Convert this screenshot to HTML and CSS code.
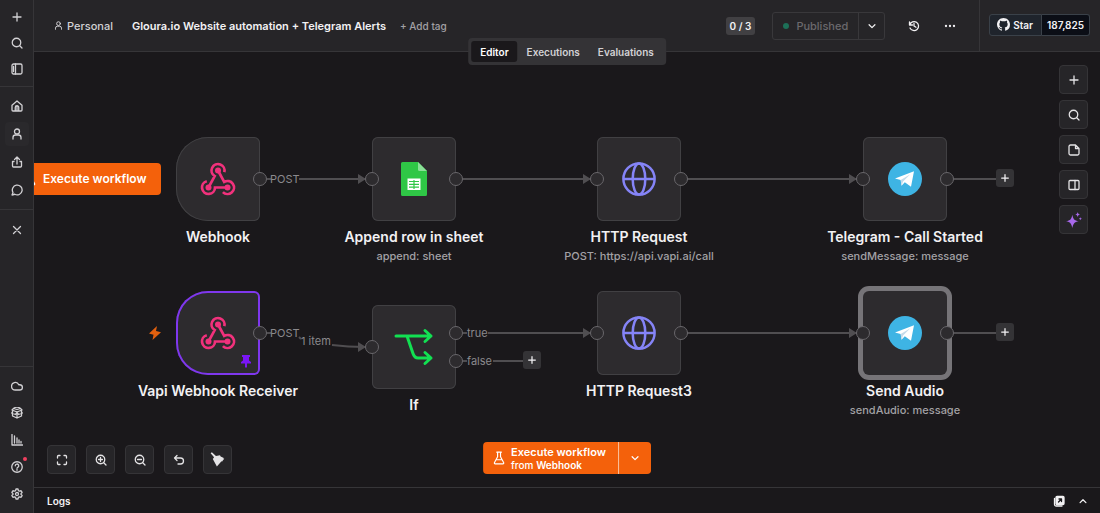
FILE: index.html
```html
<!DOCTYPE html>
<html lang="en">
<head>
<meta charset="utf-8">
<meta name="viewport" content="width=device-width, initial-scale=1">
<title>Gloura.io Website automation + Telegram Alerts</title>
<link rel="stylesheet" href="styles.css">
</head>
<body>
<svg class="defs" aria-hidden="true">
  <defs>
    <symbol id="plus" viewBox="0 0 24 24"><path d="M4 12h16M12 4v16"/></symbol>
    <symbol id="search" viewBox="0 0 24 24"><circle cx="11" cy="11" r="8.500"/><path d="m22 22-5-5"/></symbol>
    <symbol id="user" viewBox="0 0 24 24"><circle cx="12" cy="7" r="5"/><path d="M4 22v-3a5 5 0 0 1 5-5h6a5 5 0 0 1 5 5v3"/></symbol>
    <symbol id="chevron-down" viewBox="0 0 24 24"><path d="m5 9 7 7 7-7"/></symbol>
    <symbol id="flask" viewBox="0 0 24 24"><path d="M8 2h8M9.500 2v8L4 20a1.500 1.500 0 0 0 1.300 2h13.400a1.500 1.500 0 0 0 1.300-2L14.500 10V2M7 15h10"/></symbol>
    <symbol id="webhook" viewBox="0 0 36 36">
      <path d="M8.500 26.500 14.700 15.100A6.500 6.500 0 1 1 24.300 11.200M18 9.500 24.200 20.900A6.500 6.500 0 1 1 22.900 31.100M27.500 26.500H15A6.500 6.500 0 1 1 6.800 20.200" fill="none" stroke="#f1317c" stroke-width="2.700"/>
      <g fill="#f1317c"><circle cx="18" cy="9.500" r="3"/><circle cx="8.500" cy="26.500" r="3"/><circle cx="27.500" cy="26.500" r="3"/></g>
    </symbol>
    <symbol id="globe" viewBox="0 0 36 36"><g fill="none" stroke="#8584f7" stroke-width="2.500"><circle cx="18" cy="18" r="15.600"/><ellipse cx="18" cy="18" rx="6.300" ry="15.600"/><path d="M2.400 18h31.200"/></g></symbol>
    <symbol id="telegram" viewBox="0 0 36 36"><circle cx="18" cy="18" r="17" fill="#3eb4e4"/><path d="M8 17.600 27 10.200 24 25.800l-6.200-4.500-3.300 3.500-.8-5.700z" fill="#fff"/><path d="m13.700 19.100 9.600-5.900-7.200 7.400-1.600 4.200z" fill="#c5dbea"/></symbol>
  </defs>
</svg>
<div class="app">
  <nav class="sidebar" aria-label="Main">
    <div class="side-group side-top">
      <button class="side-btn" aria-label="Add"><svg class="icon"><use href="#plus"/></svg></button>
      <button class="side-btn" aria-label="Search"><svg class="icon"><use href="#search"/></svg></button>
      <button class="side-btn" aria-label="Toggle sidebar"><svg class="icon" viewBox="0 0 24 24"><rect x="2" y="2" width="20" height="20" rx="3"/><path d="M9 2v20M5 7v10"/></svg></button>
    </div>
    <div class="side-group">
      <button class="side-btn" aria-label="Home"><svg class="icon" viewBox="0 0 24 24"><path d="M2 10.500 12 2l10 8.500V20a2 2 0 0 1-2 2H4a2 2 0 0 1-2-2zM8.500 22v-7a3.500 3.500 0 0 1 7 0v7M12 14v8"/></svg></button>
      <button class="side-btn side-btn-active" aria-label="Personal"><svg class="icon"><use href="#user"/></svg></button>
      <button class="side-btn" aria-label="Shared with you"><svg class="icon" viewBox="0 0 24 24"><path d="M12 16V2M7 7l5-5 5 5M6 11H3v9a2 2 0 0 0 2 2h14a2 2 0 0 0 2-2v-9h-3"/></svg></button>
      <button class="side-btn" aria-label="Chat"><svg class="icon" viewBox="0 0 24 24"><path d="M7.500 20.500A9.800 9.800 0 1 0 4 17L2 22z"/></svg></button>
    </div>
    <div class="side-group side-close">
      <button class="side-btn" aria-label="Close"><svg class="icon" viewBox="0 0 24 24"><path d="m5 5 14 14M19 5 5 19"/></svg></button>
    </div>
    <div class="side-group side-bottom">
      <button class="side-btn" aria-label="Cloud"><svg class="icon" viewBox="0 0 24 24"><path d="M17.500 20H8.500a7.500 7.500 0 1 1 7-10.500h2a5.200 5.200 0 0 1 0 10.500z"/></svg></button>
      <button class="side-btn" aria-label="Templates"><svg class="icon" viewBox="0 0 24 24"><path d="M12 10 2 6l3-3 7 2 7-2 3 3zM3 7v11l9 4 9-4V7M12 10v12M1 12l8 3 3-5 3 5 8-3M5 3c4-3 10-3 14 0"/></svg></button>
      <button class="side-btn" aria-label="Insights"><svg class="icon" viewBox="0 0 24 24"><path d="M2 1v21h21M7 18V4M12 18V8M16 18v-6M20 18v-3"/></svg></button>
      <button class="side-btn side-btn-alert" aria-label="Help"><svg class="icon" viewBox="0 0 24 24"><circle cx="12" cy="12" r="10.500"/><path d="M8.500 9.500a3.500 3.500 0 1 1 5 3.200c-1 .5-1.500.8-1.500 1.800M12 17v1.500"/></svg></button>
      <button class="side-btn" aria-label="Settings"><svg class="icon" viewBox="0 0 24 24"><path d="M10 2h4l.8 3.200 2.200 1.200 3.200-.9 2 3.400L20 11.200v1.600l2.200 2.300-2 3.400-3.200-.9-2.200 1.200L14 22h-4l-.8-3.200L7 17.600l-3.200.9-2-3.400L4 12.800v-1.600L1.800 8.900l2-3.400 3.200.9 2.200-1.200z"/><circle cx="12" cy="12" r="3"/></svg></button>
    </div>
  </nav>

  <div class="main">
    <header class="header">
      <div class="crumbs">
        <a class="owner" href="#"><svg class="icon icon-owner"><use href="#user"/></svg>Personal</a>
        <h1 class="title">Gloura.io Website automation + Telegram Alerts</h1>
        <button class="add-tag">+ Add tag</button>
      </div>
      <div class="actions">
        <span class="count">0 / 3</span>
        <div class="publish">
          <button class="publish-state" disabled><span class="dot"></span>Published</button>
          <button class="publish-more" aria-label="Publish options"><svg class="icon icon-sm"><use href="#chevron-down"/></svg></button>
        </div>
        <button class="ghost" aria-label="History"><svg class="icon" viewBox="0 0 24 24"><path d="M3 4v6h6M3.500 9.500A9 9 0 1 1 4 16M12 7v5l4 2.500"/></svg></button>
        <button class="ghost" aria-label="More"><svg class="icon icon-fill" viewBox="0 0 24 24"><circle cx="4" cy="12" r="2.300"/><circle cx="12" cy="12" r="2.300"/><circle cx="20" cy="12" r="2.300"/></svg></button>
      </div>
      <div class="github">
        <a class="star" href="#"><svg class="mark" viewBox="0 0 16 16"><path d="M8 0C3.580 0 0 3.580 0 8c0 3.540 2.290 6.530 5.470 7.590.4.070.55-.17.55-.38 0-.19-.01-.82-.01-1.490-2.010.37-2.530-.49-2.690-.94-.09-.23-.48-.94-.82-1.130-.28-.15-.68-.52-.01-.53.63-.01 1.080.58 1.230.82.72 1.210 1.870.87 2.330.66.07-.52.28-.87.51-1.070-1.780-.2-3.640-.89-3.640-3.950 0-.87.31-1.590.82-2.150-.08-.2-.36-1.020.08-2.120 0 0 .67-.21 2.200.82.64-.18 1.320-.27 2-.27s1.360.09 2 .27c1.530-1.040 2.200-.82 2.200-.82.44 1.100.16 1.920.08 2.120.51.56.82 1.270.82 2.150 0 3.070-1.870 3.750-3.650 3.950.29.25.54.73.54 1.480 0 1.070-.01 1.930-.01 2.200 0 .21.15.46.55.38A8.010 8.010 0 0 0 16 8c0-4.420-3.580-8-8-8"/></svg>Star</a>
        <a class="star-count" href="#">187,825</a>
      </div>
      <div class="tabs" role="tablist">
        <button class="tab tab-active" role="tab" aria-selected="true">Editor</button>
        <button class="tab" role="tab" aria-selected="false">Executions</button>
        <button class="tab" role="tab" aria-selected="false">Evaluations</button>
      </div>
    </header>

    <main class="canvas">
      <svg class="wires" aria-hidden="true">
        <g class="wire">
          <path d="M233 127h4M265 127h66M429 127h127M653 127h170M920 127h42"/>
          <path d="M233 281h4M265 285l2 2M298 293q16 2 33 2M429 281h4M454 281h102M429 309h4M459 309h30M653 281h170M920 281h42"/>
        </g>
        <path class="arrow" d="M324 122l8 5-8 5zM549 122l8 5-8 5zM815 122l8 5-8 5zM324 290l8 5-8 5zM549 276l8 5-8 5zM815 276l8 5-8 5z"/>
      </svg>
      <span class="wire-label at-post-1">POST</span>
      <span class="wire-label at-post-2">POST</span>
      <span class="wire-label at-item">1 item</span>
      <span class="wire-label at-true">true</span>
      <span class="wire-label at-false">false</span>
      <button class="add-node at-add-1" aria-label="Add node"><svg class="icon icon-sm"><use href="#plus"/></svg></button>
      <button class="add-node at-add-2" aria-label="Add node"><svg class="icon icon-sm"><use href="#plus"/></svg></button>
      <button class="add-node at-add-3" aria-label="Add node"><svg class="icon icon-sm"><use href="#plus"/></svg></button>

      <button class="execute execute-node"><svg class="icon icon-flask"><use href="#flask"/></svg>Execute workflow</button>
      <svg class="bolt" viewBox="0 0 14 16" aria-hidden="true"><path d="M9 1 1 8.500l4.500 1.300L4.500 15 13 7.300 8 6z"/></svg>

      <section class="node at-webhook">
        <div class="box box-trigger"><svg class="node-icon"><use href="#webhook"/></svg><i class="port port-out"></i></div>
        <h2 class="name">Webhook</h2>
      </section>
      <section class="node at-sheet">
        <div class="box"><svg class="node-icon" viewBox="0 0 36 36"><path d="M6.500 1H22l9 9v23.500a1.500 1.500 0 0 1-1.500 1.500h-23A1.500 1.500 0 0 1 5 33.500v-31A1.500 1.500 0 0 1 6.500 1z" fill="#2fc746"/><path d="M22 1v7.500a1.500 1.500 0 0 0 1.500 1.500H31z" fill="#8ae096"/><path d="M11.500 17.500h13v11.500h-13z" fill="#fff"/><path d="M13 20.500h10M13 23.300h10M13 26.100h10M18 19v9" stroke="#2fc746" stroke-width="1.200"/></svg><i class="port port-in"></i><i class="port port-out"></i></div>
        <h2 class="name">Append row in sheet</h2>
        <p class="detail">append: sheet</p>
      </section>
      <section class="node at-http">
        <div class="box"><svg class="node-icon"><use href="#globe"/></svg><i class="port port-in"></i><i class="port port-out"></i></div>
        <h2 class="name">HTTP Request</h2>
        <p class="detail">POST: https://api.vapi.ai/call</p>
      </section>
      <section class="node at-telegram">
        <div class="box"><svg class="node-icon"><use href="#telegram"/></svg><i class="port port-in"></i><i class="port port-out"></i></div>
        <h2 class="name">Telegram - Call Started</h2>
        <p class="detail">sendMessage: message</p>
      </section>
      <section class="node at-vapi">
        <div class="box box-trigger box-pinned"><svg class="node-icon"><use href="#webhook"/></svg><i class="port port-out"></i>
          <svg class="pin" viewBox="0 0 12 14" aria-hidden="true"><path d="M2 1h8v2H9v3.500L11 8v1.500H7V13l-1 1-1-1V9.500H1V8l2-1.500V3H2z"/></svg></div>
        <h2 class="name">Vapi Webhook Receiver</h2>
      </section>
      <section class="node at-if">
        <div class="box"><svg class="node-icon node-icon-if" viewBox="0 0 40 40"><path d="M2 9h35M31 3.500 37 9l-6 5.500M13 9l6 17.500q1.500 4.500 5 4.500h13M31 25.500l6 5.500-6 5.500"/></svg><i class="port port-in"></i><i class="port port-out port-upper"></i><i class="port port-out port-lower"></i></div>
        <h2 class="name">If</h2>
      </section>
      <section class="node at-http3">
        <div class="box"><svg class="node-icon"><use href="#globe"/></svg><i class="port port-in"></i><i class="port port-out"></i></div>
        <h2 class="name">HTTP Request3</h2>
      </section>
      <section class="node at-audio">
        <div class="box box-selected"><svg class="node-icon"><use href="#telegram"/></svg><i class="port port-in"></i><i class="port port-out"></i></div>
        <h2 class="name">Send Audio</h2>
        <p class="detail">sendAudio: message</p>
      </section>

      <div class="tools tools-right">
        <button class="tool" aria-label="Add node"><svg class="icon"><use href="#plus"/></svg></button>
        <button class="tool" aria-label="Search"><svg class="icon"><use href="#search"/></svg></button>
        <button class="tool" aria-label="Sticky note"><svg class="icon" viewBox="0 0 24 24"><path d="M15 2H5a3 3 0 0 0-3 3v14a3 3 0 0 0 3 3h14a3 3 0 0 0 3-3V9zM15 2v7h7"/></svg></button>
        <button class="tool" aria-label="Side panel"><svg class="icon" viewBox="0 0 24 24"><rect x="2" y="3" width="20" height="18" rx="2"/><path d="M14 3v18"/></svg></button>
        <button class="tool" aria-label="Assistant"><svg class="icon icon-spark" viewBox="0 0 24 24"><path d="M9.500 4c1.300 6.500 3 8.700 9.500 10-6.500 1.300-8.200 3.500-9.500 10C8.200 17.500 6.500 15.300 0 14c6.500-1.300 8.200-3.500 9.500-10zM17.500 0c.5 2.600 1.300 3.400 3.900 3.900-2.600.5-3.400 1.300-3.900 3.900-.5-2.600-1.300-3.400-3.900-3.900 2.600-.5 3.400-1.300 3.900-3.900zM21.500 7.500c.3 1.600.9 2.200 2.500 2.500-1.600.3-2.200.9-2.500 2.500-.3-1.600-.9-2.200-2.500-2.500 1.600-.3 2.200-.9 2.500-2.500z"/></svg></button>
      </div>

      <div class="tools tools-bottom">
        <button class="tool" aria-label="Fit view"><svg class="icon" viewBox="0 0 24 24"><path d="M3 8V5a2 2 0 0 1 2-2h3M16 3h3a2 2 0 0 1 2 2v3M21 16v3a2 2 0 0 1-2 2h-3M8 21H5a2 2 0 0 1-2-2v-3"/></svg></button>
        <button class="tool" aria-label="Zoom in"><svg class="icon" viewBox="0 0 24 24"><circle cx="11" cy="11" r="8.500"/><path d="m22 22-5-5M7 11h8M11 7v8"/></svg></button>
        <button class="tool" aria-label="Zoom out"><svg class="icon" viewBox="0 0 24 24"><circle cx="11" cy="11" r="8.500"/><path d="m22 22-5-5M7 11h8"/></svg></button>
        <button class="tool" aria-label="Undo"><svg class="icon" viewBox="0 0 24 24"><path d="M8 3 3 8l5 5M3 8h12a6 6 0 0 1 0 12h-5"/></svg></button>
        <button class="tool" aria-label="Tidy up"><svg class="icon icon-fill icon-broom" viewBox="0 0 24 24"><path d="m1 2 2-1.500 6.500 6L16 5l1 2 6 3-2 .8 1.500 1.400-2.500.5 1 1.500-3 1-7 7.800L4.500 11l2-2.500z"/></svg></button>
      </div>

      <div class="run">
        <button class="execute run-main"><svg class="icon icon-flask"><use href="#flask"/></svg><span class="run-text">Execute workflow<small class="run-from">from <b>Webhook</b></small></span></button>
        <button class="execute run-more" aria-label="Choose trigger"><svg class="icon icon-sm"><use href="#chevron-down"/></svg></button>
      </div>
    </main>

    <footer class="logs">
      <h2 class="logs-title">Logs</h2>
      <button class="ghost ghost-log" aria-label="Pop out"><svg class="icon" viewBox="0 0 24 24"><path d="M3 7v12a3 3 0 0 0 3 3h12"/><rect x="6" y="3" width="16" height="16" rx="2" fill="currentColor"/><path d="m11 14 6-6M12 8h5v5" stroke="#1a181b"/></svg></button>
      <button class="ghost ghost-log" aria-label="Open logs"><svg class="icon icon-sm" viewBox="0 0 24 24"><path d="m5 16 7-7 7 7"/></svg></button>
    </footer>
  </div>
</div>
</body>
</html>
```
FILE: styles.css
```css
:root {
  --panel: #262528;
  --canvas: #1a181b;
  --line: #363538;
  --node: #2d2b2e;
  --node-line: #414043;
  --wire: #504e51;
  --text: #f2f1f3;
  --muted: #a3a1a5;
  --orange: #f4610b;
}

* { box-sizing: border-box; }

body {
  margin: 0;
  background: var(--canvas);
  color: var(--text);
  font: 500 11px/16px Inter, "Liberation Sans", sans-serif;
}

h1, h2, p { margin: 0; font: inherit; }
a { color: inherit; text-decoration: none; }

button {
  display: flex;
  align-items: center;
  justify-content: center;
  padding: 0;
  border: 0;
  background: none;
  color: inherit;
  font: inherit;
  white-space: nowrap;
}

.defs { position: absolute; width: 0; height: 0; }

.icon {
  width: 12px;
  height: 12px;
  flex: none;
  fill: none;
  stroke: currentColor;
  stroke-width: 2.6;
  stroke-linecap: round;
  stroke-linejoin: round;
}
.icon-sm { width: 10px; height: 10px; stroke-width: 3; }
.icon-owner { width: 9px; height: 9px; }
.icon-fill { fill: currentColor; stroke: none; }
.icon-broom { width: 15px; height: 15px; }
.icon-flask { width: 14px; height: 14px; stroke-width: 2; }
.icon-spark { width: 16px; height: 16px; fill: #a768ea; stroke: none; }

.app { display: flex; height: 100vh; }

.sidebar {
  display: flex;
  flex: none;
  flex-direction: column;
  width: 34px;
  border-right: 1px solid var(--line);
  background: var(--panel);
  color: #d2d1d4;
}
.side-group {
  display: flex;
  flex-direction: column;
  align-items: center;
  gap: 4px;
  padding: 7px 0;
  border-bottom: 1px solid var(--line);
}
.side-top { gap: 2px; padding: 5px 0; }
.side-close { padding: 8px 0; border: 0; }
.side-bottom {
  gap: 3px;
  margin-top: auto;
  padding: 7px 0;
  border-top: 1px solid var(--line);
  border-bottom: 0;
}
.side-btn { position: relative; width: 24px; height: 24px; border-radius: 4px; }
.side-btn-active { background: #2a292c; }
.side-btn-alert::after {
  content: "";
  position: absolute;
  top: 2px;
  right: 2px;
  width: 4px;
  height: 4px;
  border-radius: 50%;
  background: #f0405f;
}

.main { display: flex; flex: 1; flex-direction: column; min-width: 0; }

.header {
  position: relative;
  z-index: 1;
  display: flex;
  flex: none;
  height: 52px;
  border-bottom: 1px solid var(--line);
  background: var(--panel);
}
.crumbs { display: flex; flex: 1; align-items: center; min-width: 0; padding-left: 20px; white-space: nowrap; }
.owner { display: flex; align-items: center; gap: 4px; margin-right: 19px; color: #d2d1d4; }
.title { margin-right: 14px; font-weight: 600; }
.add-tag { color: var(--muted); font-size: 10px; }

.actions { display: flex; align-items: center; padding-right: 17px; }
.count {
  margin-right: 17px;
  padding: 1px 4px;
  border-radius: 3px;
  background: #414043;
  font-size: 10px;
  font-weight: 600;
}
.publish {
  display: flex;
  height: 28px;
  margin-right: 17px;
  border: 1px solid #39383b;
  border-radius: 3px;
}
.publish-state { gap: 7px; padding: 0 10px; color: #6b696d; }
.publish-more { width: 26px; border-left: 1px solid #39383b; }
.dot { width: 6px; height: 6px; border-radius: 50%; background: #1d7058; }
.ghost { width: 24px; height: 24px; }
.ghost + .ghost { margin-left: 12px; }

.github {
  display: flex;
  align-items: center;
  padding: 0 10px 2px 9px;
  border-left: 1px solid var(--line);
  font-size: 10px;
  font-weight: 600;
}
.star, .star-count { display: flex; align-items: center; height: 22px; border: 1px solid #3a4149; }
.star { gap: 3px; padding: 0 8px 0 7px; border-radius: 3px 0 0 3px; background: #1f242c; }
.star-count { padding: 0 5px; border-left: 0; border-radius: 0 3px 3px 0; background: #0b0e16; }
.mark { width: 13px; height: 13px; fill: currentColor; }

.tabs {
  position: absolute;
  top: 38px;
  left: 50%;
  display: flex;
  padding: 3px;
  border-radius: 4px;
  background: #343336;
  transform: translateX(-50%);
}
.tab { height: 21px; padding: 0 9px; border-radius: 3px; color: #d2d1d4; font-size: 10px; font-weight: 600; }
.tab-active { background: var(--canvas); color: #fff; }

.canvas { position: relative; flex: 1; min-height: 0; overflow: hidden; }
.wires { position: absolute; inset: 0; width: 100%; height: 100%; }
.wire { fill: none; stroke: var(--wire); stroke-width: 2; }
.arrow { fill: var(--wire); }
.wire-label { position: absolute; color: #8b898d; font-weight: 400; }
.at-post-1 { left: 236px; top: 119px; }
.at-post-2 { left: 236px; top: 273px; }
.at-item { left: 267px; top: 281px; }
.at-true { left: 433px; top: 273px; }
.at-false { left: 433px; top: 301px; }

.add-node { position: absolute; width: 18px; height: 18px; border-radius: 3px; background: #343336; }
.at-add-1 { left: 962px; top: 117px; }
.at-add-2 { left: 962px; top: 271px; }
.at-add-3 { left: 489px; top: 299px; }

.node { position: absolute; display: flex; flex-direction: column; align-items: center; width: 84px; }
.at-webhook { left: 142px; top: 85px; }
.at-sheet { left: 338px; top: 85px; }
.at-http { left: 563px; top: 85px; }
.at-telegram { left: 829px; top: 85px; }
.at-vapi { left: 142px; top: 239px; }
.at-if { left: 338px; top: 253px; }
.at-http3 { left: 563px; top: 239px; }
.at-audio { left: 829px; top: 239px; }

.box {
  position: relative;
  display: flex;
  align-items: center;
  justify-content: center;
  width: 84px;
  height: 84px;
  margin-bottom: 6px;
  border-radius: 6px;
  background: var(--node);
  box-shadow: inset 0 0 0 1px var(--node-line);
}
.box-trigger { border-radius: 32px 6px 6px 32px; }
.box-pinned { box-shadow: inset 0 0 0 2px #7f37ee; }
.box-selected { box-shadow: 0 0 0 5px #767478; }
.node-icon { width: 36px; height: 36px; }
.node-icon-if {
  width: 40px;
  height: 40px;
  fill: none;
  stroke: #12e052;
  stroke-width: 3;
  stroke-linecap: round;
  stroke-linejoin: round;
}
.port {
  position: absolute;
  top: 35px;
  width: 14px;
  height: 14px;
  border: 1px solid #69676b;
  border-radius: 50%;
  background: var(--node);
}
.port-in { left: -7px; }
.port-out { right: -7px; }
.port-upper { top: 21px; }
.port-lower { top: 49px; }
.pin { position: absolute; right: 8px; bottom: 7px; width: 12px; height: 14px; fill: #7a16f5; }
.name { font-size: 14px; line-height: 20px; font-weight: 600; white-space: nowrap; }
.detail { color: var(--muted); line-height: 18px; white-space: nowrap; }
.bolt { position: absolute; left: 114px; top: 273px; width: 14px; height: 16px; fill: #e2600f; }

.execute { background: var(--orange); color: #fff; font-size: 12px; font-weight: 600; }
.execute-node {
  position: absolute;
  left: -25px;
  top: 111px;
  gap: 6px;
  height: 32px;
  padding: 0 14px;
  border-radius: 4px;
}

.tool {
  width: 29px;
  height: 29px;
  border: 1px solid #353437;
  border-radius: 4px;
  background: var(--panel);
  color: #e4e3e5;
}
.tools { position: absolute; display: flex; }
.tools-right { top: 13px; right: 12px; flex-direction: column; gap: 6px; }
.tools-bottom { bottom: 13px; left: 13px; gap: 10px; }

.run {
  position: absolute;
  bottom: 13px;
  left: 50%;
  display: flex;
  height: 32px;
  border-radius: 4px;
  overflow: hidden;
  transform: translateX(-50%);
}
.run-main { gap: 5px; padding: 0 12px 0 9px; font-size: 11px; line-height: 14px; text-align: left; }
.run-text { display: flex; flex-direction: column; }
.run-from { font-size: 10px; line-height: 12px; font-weight: 500; }
.run-from b { font-weight: 600; }
.run-more { width: 33px; border-left: 1px solid #fbc4a0; }

.logs {
  display: flex;
  flex: none;
  align-items: center;
  height: 26px;
  padding: 0 5px 0 13px;
  border-top: 1px solid var(--line);
}
.logs-title { margin-right: auto; font-size: 10px; font-weight: 600; }
.ghost-log + .ghost-log { margin-left: 0; }
```
